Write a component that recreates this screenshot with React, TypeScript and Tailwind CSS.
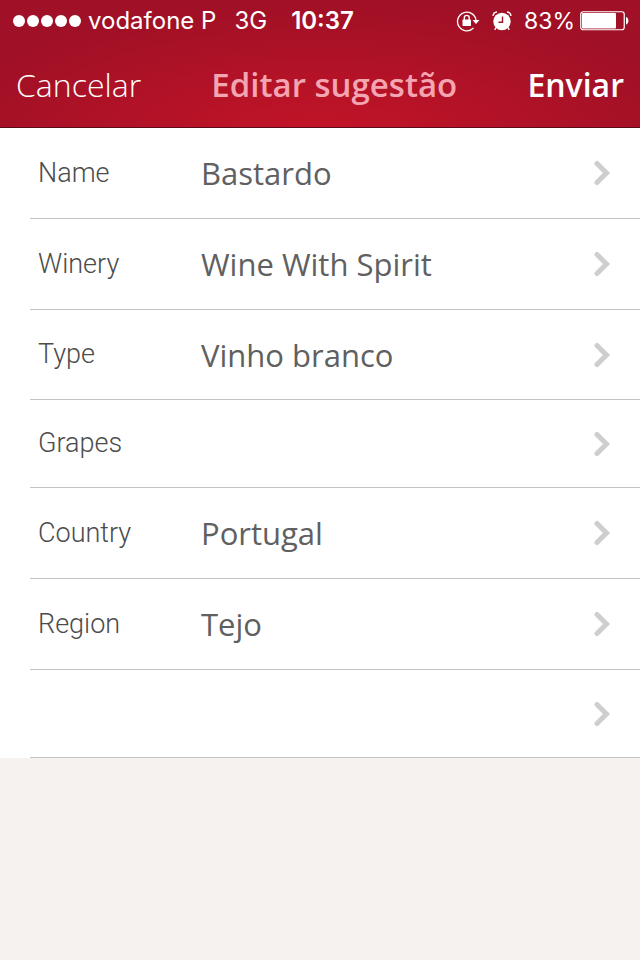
type Field = {
  label: string;
  value: string;
  height: string;
};

const fields: Field[] = [
  { label: "Name", value: "Bastardo", height: "h-[91px]" },
  { label: "Winery", value: "Wine With Spirit", height: "h-[91px]" },
  { label: "Type", value: "Vinho branco", height: "h-[90px]" },
  { label: "Grapes", value: "", height: "h-[88px]" },
  { label: "Country", value: "Portugal", height: "h-[91px]" },
  { label: "Region", value: "Tejo", height: "h-[91px]" },
  { label: "", value: "", height: "h-[88px]" }
];

function SignalDots() {
  return (
    <div className="flex gap-[2px]" role="img" aria-label="Signal strength">
      {[0, 1, 2, 3, 4].map((dot) => (
        <span key={dot} className="size-3 rounded-full bg-white" />
      ))}
    </div>
  );
}

function RotationLockIcon() {
  return (
    <svg width="24" height="22" viewBox="0 0 24 22" fill="none" aria-hidden="true">
      <path d="M17.5 18A9.3 9.3 0 1 1 20 10" stroke="white" strokeWidth="1.3" />
      <path d="M16.5 10h7L20 14z" fill="white" />
      <rect x="6.5" y="9.5" width="8.5" height="6.5" rx="0.8" fill="white" />
      <path d="M8.3 10V7.8a2.45 2.45 0 0 1 4.9 0V10" stroke="white" strokeWidth="1.4" />
    </svg>
  );
}

function AlarmIcon() {
  return (
    <svg width="20" height="20" viewBox="0 0 20 20" fill="none" aria-hidden="true">
      <circle cx="10" cy="10.5" r="8.7" fill="white" />
      <path d="M1 5C1.2 2.5 3 1.2 5 1M19 5C18.8 2.5 17 1.2 15 1" stroke="white" strokeWidth="1.3" />
      <path d="M4 16.5 2.8 18.8M16 16.5l1.2 2.3" stroke="white" strokeWidth="1.5" />
      <path d="M10.5 5.5V11.2H6.5" stroke="#a01228" strokeWidth="1.4" />
    </svg>
  );
}

function BatteryIcon() {
  return (
    <svg width="49" height="20" viewBox="0 0 49 20" fill="none" aria-hidden="true">
      <rect x="0.75" y="0.75" width="43.5" height="18" rx="2.5" stroke="white" strokeWidth="1.2" />
      <rect x="2" y="2" width="34" height="15.5" rx="1" fill="white" />
      <path d="M46 6c3.2 1 3.2 6.5 0 7.5z" fill="white" />
    </svg>
  );
}

function StatusBar() {
  return (
    <div className="flex h-[42px] items-center justify-between pl-[13px] pr-[11px] font-[Inter,sans-serif] leading-10">
      <div className="flex items-center text-[24px]">
        <SignalDots />
        <span className="ml-[7px]">vodafone P</span>
        <span className="ml-[18px]">3G</span>
        <span className="ml-6 font-semibold">10:37</span>
      </div>
      <div className="flex items-center text-[23px]">
        <RotationLockIcon />
        <span className="ml-3">
          <AlarmIcon />
        </span>
        <span className="ml-3">83%</span>
        <span className="ml-[5px]">
          <BatteryIcon />
        </span>
      </div>
    </div>
  );
}

function NavBar() {
  return (
    <nav className="flex h-[85px] items-center justify-between px-4 text-[32px] leading-10">
      <button type="button" className="font-light">
        Cancelar
      </button>
      <h1 className="text-[33px] font-semibold text-[#f3a5b1]">Editar sugestão</h1>
      <button type="button" className="font-semibold">
        Enviar
      </button>
    </nav>
  );
}

function FieldRow({ label, value, height }: Field) {
  return (
    <li className={`${height} ml-[30px] border-b border-[#c4c4c4]`}>
      <button
        type="button"
        aria-label={label ? undefined : "More"}
        className="flex h-full w-full items-center pl-2 pr-7 text-left"
      >
        <span className="w-[163px] font-[Roboto,sans-serif] text-[27px] font-light text-[#4c4c4c]">{label}</span>
        <span className="flex-1 text-[31px] leading-10 text-[#606060]">{value}</span>
        <svg width="20" height="26" viewBox="0 0 20 26" fill="none" aria-hidden="true">
          <path d="m5 3.5 9.5 9.5L5 22.5" stroke="#d0cdcd" strokeWidth="5" strokeLinecap="round" />
        </svg>
      </button>
    </li>
  );
}

export default function App() {
  return (
    <div className="min-h-screen bg-[#f6f2ef] font-['Open_Sans','Noto_Sans',sans-serif]">
      <header className="border-b border-[#5c0c18] bg-[radial-gradient(ellipse_60%_110%_at_50%_110%,#c41428,#a01026)] text-white">
        <StatusBar />
        <NavBar />
      </header>
      <ul className="bg-white">
        {fields.map((field, index) => (
          <FieldRow key={index} {...field} />
        ))}
      </ul>
    </div>
  );
}
